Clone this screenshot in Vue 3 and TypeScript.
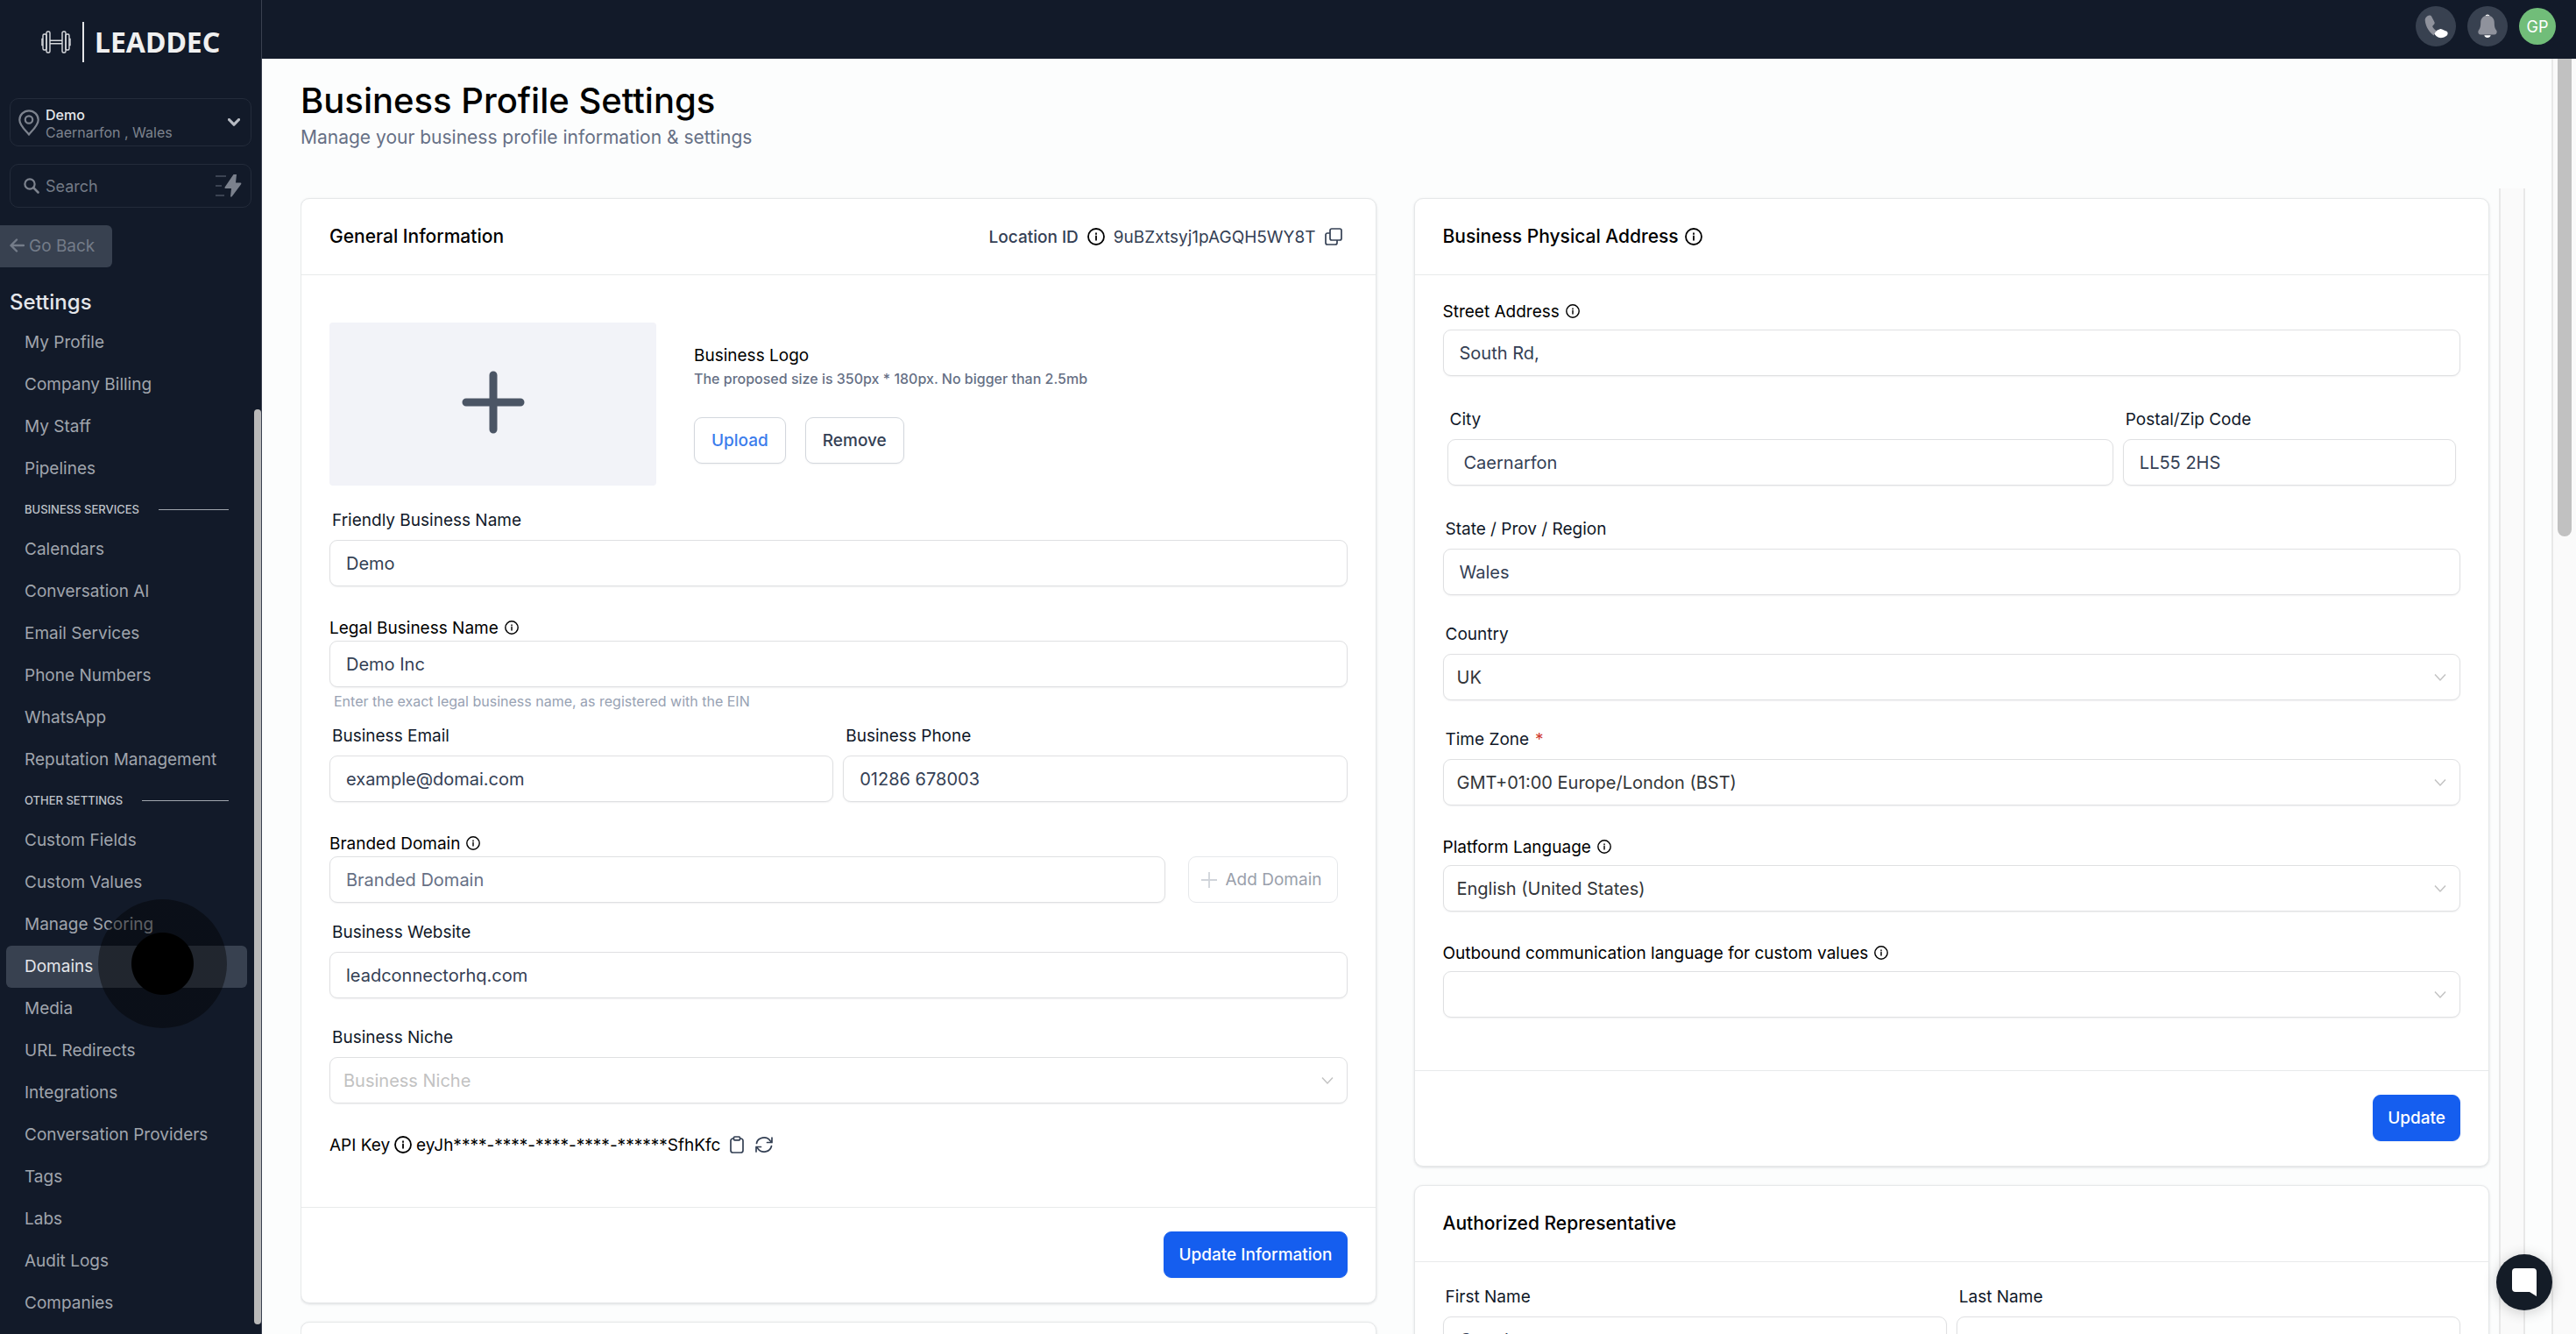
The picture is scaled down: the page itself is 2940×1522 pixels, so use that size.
<script setup lang="ts">
import { ref } from 'vue'

interface NavGroup {
  title?: string
  items: string[]
}

const navGroups: NavGroup[] = [
  { items: ['My Profile', 'Company Billing', 'My Staff', 'Pipelines'] },
  {
    title: 'BUSINESS SERVICES',
    items: ['Calendars', 'Conversation AI', 'Email Services', 'Phone Numbers', 'WhatsApp', 'Reputation Management'],
  },
  {
    title: 'OTHER SETTINGS',
    items: [
      'Custom Fields', 'Custom Values', 'Manage Scoring', 'Domains', 'Media', 'URL Redirects',
      'Integrations', 'Conversation Providers', 'Tags', 'Labs', 'Audit Logs', 'Companies',
    ],
  },
]
const activeItem = 'Domains'

const form = ref({
  friendlyName: 'Demo',
  legalName: 'Demo Inc',
  email: 'example@domai.com',
  phone: '01286 678003',
  brandedDomain: '',
  website: 'leadconnectorhq.com',
  niche: '',
  street: 'South Rd,',
  city: 'Caernarfon',
  postal: 'LL55 2HS',
  state: 'Wales',
  country: 'UK',
  timeZone: 'GMT+01:00 Europe/London (BST)',
  language: 'English (United States)',
  outbound: '',
  firstName: 'Gareth',
  lastName: '',
})
</script>

<template>
  <div class="app">
    <svg class="symbols" aria-hidden="true">
      <symbol id="i-info" viewBox="0 0 20 20">
        <circle cx="10" cy="10" r="9" fill="none" stroke="currentColor" stroke-width="1.8" />
        <path d="M10 9.4v4.4M10 6.2v.9" fill="none" stroke="currentColor" stroke-width="1.8" stroke-linecap="round" />
      </symbol>
      <symbol id="i-chev" viewBox="0 0 14 10">
        <path d="M1 1.5l6 6.500 6-6.500" fill="none" stroke="currentColor" stroke-width="1.500" />
      </symbol>
    </svg>

    <aside class="sidebar">
      <div class="brand">
        <svg class="dumbbell" viewBox="0 0 34 26" fill="none" stroke="#d8dade" stroke-width="1.400">
          <rect x="6" y="1" width="4" height="24" rx="1.500" />
          <rect x="2" y="4" width="4" height="18" rx="1.500" />
          <path d="M2 9.500H1v7h1M32 9.500h1v7h-1M10 11.200h14M10 14.800h14" />
          <rect x="24" y="1" width="4" height="24" rx="1.500" />
          <rect x="28" y="4" width="4" height="18" rx="1.500" />
        </svg>
        <span class="brand-rule"></span>
        <span class="brand-name">LEADDEC</span>
      </div>

      <button class="location" type="button">
        <svg class="pin" viewBox="0 0 24 30" fill="none" stroke="currentColor" stroke-width="2.200">
          <path d="M12 28.500C9 24.500 1.300 18.500 1.300 11.800a10.700 10.500 0 0 1 21.400 0C22.700 18.500 15 24.500 12 28.500z" stroke-linejoin="round" />
          <circle cx="12" cy="11.500" r="4.200" />
        </svg>
        <span class="location-text">
          <span class="location-name">Demo</span>
          <span class="location-place">Caernarfon , Wales</span>
        </span>
        <svg class="location-chev" viewBox="0 0 14 10" fill="none" stroke="#b6bac2" stroke-width="3.200">
          <path d="M1.500 1.500L7 7.200l5.500-5.700" stroke-linecap="round" stroke-linejoin="round" />
        </svg>
      </button>

      <div class="search">
        <svg class="search-icon" viewBox="0 0 18 18" fill="none" stroke="currentColor" stroke-width="2.200">
          <circle cx="7" cy="7" r="5.600" />
          <path d="M11.200 11.200L16.500 16.500" stroke-linecap="round" stroke-width="2.600" />
        </svg>
        <input type="search" placeholder="Search" aria-label="Search" />
        <svg class="bolt" viewBox="0 0 30 28">
          <path d="M0 3h12M0 14h7M0 25h10" stroke="#3b4352" stroke-width="2" />
          <path d="M20.500 1h3.500l-1 9.500h5.500c1 0 1 1 .6 1.700L18.500 26.500h-1.500l1-9.500h-6.500c-1 0-1.300-1-.7-1.800z" fill="#7b818d" />
        </svg>
      </div>

      <button class="go-back" type="button">
        <svg viewBox="0 0 17 16" fill="none" stroke="currentColor" stroke-width="2.400" stroke-linecap="round" stroke-linejoin="round">
          <path d="M8 1.500L1.500 8 8 14.500M2 8h14" />
        </svg>
        Go Back
      </button>

      <h2 class="side-title">Settings</h2>
      <nav class="nav">
        <template v-for="(group, gi) in navGroups" :key="gi">
          <div v-if="group.title" class="nav-section">
            <span>{{ group.title }}</span>
            <span class="nav-rule"></span>
          </div>
          <a v-for="item in group.items" :key="item" href="#" class="nav-item" :class="{ active: item === activeItem }">{{ item }}</a>
        </template>
      </nav>
      <span class="side-thumb"></span>
      <span class="pointer"></span>
    </aside>

    <div class="right">
      <header class="topbar">
        <button class="round" type="button" aria-label="Call">
          <svg viewBox="0 0 28 28">
            <path d="M6.500 1.500c-1.800.2-5 2.500-4.800 5.500.5 8 6 15 10 17.500l2.800-5.500c-2-1.300-3.500-3-4.400-5l2.300-2.800c.4-.6.4-1.300.1-1.900L9 2.400c-.5-.8-1.300-1.100-2.500-.9z" fill="#8f929c" />
            <path d="M12.500 22.500c2-4.500 4.500-4.500 7-5.500 2.500.6 4 1.800 7 2.800 1.500 1.200 1.500 3.200.2 4.700-2 2-6 3-8.700 2.500-2.500-.7-4.500-2.500-5.500-4.500z" fill="#fff" />
          </svg>
        </button>
        <button class="round" type="button" aria-label="Notifications">
          <svg viewBox="0 0 28 28">
            <path d="M11.500 2a2.600 2.200 0 0 1 5 0z" fill="#fff" />
            <path d="M14 1.800c4.700 0 7.800 3.300 7.800 8 0 5 .8 7 2.300 8.700 1.200 1.500.5 5-2.100 5H6c-2.600 0-3.300-3.500-2.100-5 1.500-1.700 2.300-3.700 2.300-8.700 0-4.700 3.100-8 7.800-8z" fill="#8f929c" />
            <path d="M10.300 24.300h7.400c-.5 1.700-1.800 2.700-3.700 2.700s-3.200-1-3.700-2.700z" fill="#fff" />
          </svg>
        </button>
        <button class="avatar" type="button">GP</button>
      </header>

      <div class="page">
        <main class="content">
          <h1>Business Profile Settings</h1>
          <p class="subtitle">Manage your business profile information &amp; settings</p>

          <div class="scroller">
            <div class="columns">
              <div class="column">
                <section class="card">
                  <div class="card-head">
                    <h3>General Information</h3>
                    <div class="location-id">
                      <span class="strong">Location ID</span>
                      <svg class="info big"><use href="#i-info" /></svg>
                      <span>9uBZxtsyj1pAGQH5WY8T</span>
                      <button class="bare" type="button" aria-label="Copy">
                        <svg viewBox="0 0 20 20" fill="none" stroke="currentColor" stroke-width="1.700">
                          <rect x="6" y="1" width="13" height="13" rx="2" />
                          <path d="M6 6H3a2 2 0 0 0-2 2v9a2 2 0 0 0 2 2h9a2 2 0 0 0 2-2v-3" />
                        </svg>
                      </button>
                    </div>
                  </div>
                  <div class="card-body general">
                    <div class="logo-row">
                      <button class="logo-drop" type="button" aria-label="Add logo">
                        <svg viewBox="0 0 72 72" stroke="#4b5565" stroke-width="9" stroke-linecap="round">
                          <path d="M36 5v62M5 36h62" />
                        </svg>
                      </button>
                      <div class="logo-info">
                        <span class="logo-title">Business Logo</span>
                        <span class="logo-hint">The proposed size is 350px * 180px. No bigger than 2.5mb</span>
                        <div class="logo-actions">
                          <button class="btn link" type="button">Upload</button>
                          <button class="btn" type="button">Remove</button>
                        </div>
                      </div>
                    </div>

                    <div class="field loose gap-m">
                      <label for="friendly">Friendly Business Name</label>
                      <input id="friendly" v-model="form.friendlyName" type="text" />
                    </div>
                    <div class="field tight gap-l">
                      <label for="legal">Legal Business Name <svg class="info"><use href="#i-info" /></svg></label>
                      <input id="legal" v-model="form.legalName" type="text" />
                      <p class="hint">Enter the exact legal business name, as registered with the EIN</p>
                    </div>
                    <div class="pair gap-s">
                      <div class="field loose">
                        <label for="email">Business Email</label>
                        <input id="email" v-model="form.email" type="email" />
                      </div>
                      <div class="field loose">
                        <label for="phone">Business Phone</label>
                        <input id="phone" v-model="form.phone" type="tel" />
                      </div>
                    </div>
                    <div class="field tight gap-l">
                      <label for="branded">Branded Domain <svg class="info"><use href="#i-info" /></svg></label>
                      <div class="domain-row">
                        <input id="branded" v-model="form.brandedDomain" type="text" placeholder="Branded Domain" />
                        <button class="btn add" type="button" disabled>
                          <svg viewBox="0 0 18 18" stroke="#d0d4da" stroke-width="1.800"><path d="M9 0v18M0 9h18" /></svg>
                          Add Domain
                        </button>
                      </div>
                    </div>
                    <div class="field loose gap-w">
                      <label for="website">Business Website</label>
                      <input id="website" v-model="form.website" type="text" />
                    </div>
                    <div class="field loose gap-x">
                      <label for="niche">Business Niche</label>
                      <div class="select">
                        <select id="niche" v-model="form.niche" class="empty"><option value="">Business Niche</option></select>
                        <svg><use href="#i-chev" /></svg>
                      </div>
                    </div>
                    <div class="api gap-l">
                      <span>API Key</span>
                      <svg class="info big"><use href="#i-info" /></svg>
                      <span class="api-key">eyJh****-****-****-****-******SfhKfc</span>
                      <button class="bare" type="button" aria-label="Copy API key">
                        <svg viewBox="0 0 20 20" fill="none" stroke="currentColor" stroke-width="1.700">
                          <path d="M6 3H4.500A2.500 2.500 0 0 0 2 5.500v11A2.500 2.500 0 0 0 4.500 19h9a2.500 2.500 0 0 0 2.500-2.500v-11A2.500 2.500 0 0 0 13.500 3H12" />
                          <rect x="5.500" y="1" width="7" height="3.800" rx="1" />
                        </svg>
                      </button>
                      <button class="bare" type="button" aria-label="Refresh API key">
                        <svg viewBox="0 0 20 20" fill="none" stroke="currentColor" stroke-width="1.700" stroke-linecap="round" stroke-linejoin="round">
                          <path d="M1.500 8.500a8.500 7.800 0 0 1 15.500-3L19 7.500M19 2v5.500h-5.500M18.500 11.500a8.500 7.800 0 0 1-15.500 3L1 12.500M1 18v-5.500h5.500" />
                        </svg>
                      </button>
                    </div>
                  </div>
                  <div class="card-foot"><button class="btn primary" type="button">Update Information</button></div>
                </section>
                <section class="card"><div class="card-head"></div></section>
              </div>

              <div class="column">
                <section class="card">
                  <div class="card-head">
                    <h3>Business Physical Address <svg class="info big"><use href="#i-info" /></svg></h3>
                  </div>
                  <div class="card-body address">
                    <div class="field mid">
                      <label for="street">Street Address <svg class="info"><use href="#i-info" /></svg></label>
                      <input id="street" v-model="form.street" type="text" />
                    </div>
                    <div class="pair city gap-xl">
                      <div class="field loose">
                        <label for="city">City</label>
                        <input id="city" v-model="form.city" type="text" />
                      </div>
                      <div class="field loose">
                        <label for="postal">Postal/Zip Code</label>
                        <input id="postal" v-model="form.postal" type="text" />
                      </div>
                    </div>
                    <div class="field loose gap-xl">
                      <label for="state">State / Prov / Region</label>
                      <input id="state" v-model="form.state" type="text" />
                    </div>
                    <div class="field loose gap-x">
                      <label for="country">Country</label>
                      <div class="select">
                        <select id="country" v-model="form.country"><option>UK</option></select>
                        <svg><use href="#i-chev" /></svg>
                      </div>
                    </div>
                    <div class="field loose gap-x">
                      <label for="tz">Time Zone <span class="req">*</span></label>
                      <div class="select">
                        <select id="tz" v-model="form.timeZone"><option>GMT+01:00 Europe/London (BST)</option></select>
                        <svg><use href="#i-chev" /></svg>
                      </div>
                    </div>
                    <div class="field mid gap-l">
                      <label for="lang">Platform Language <svg class="info"><use href="#i-info" /></svg></label>
                      <div class="select">
                        <select id="lang" v-model="form.language"><option>English (United States)</option></select>
                        <svg><use href="#i-chev" /></svg>
                      </div>
                    </div>
                    <div class="field mid gap-l">
                      <label for="outbound">Outbound communication language for custom values <svg class="info"><use href="#i-info" /></svg></label>
                      <div class="select">
                        <select id="outbound" v-model="form.outbound"><option value=""></option></select>
                        <svg><use href="#i-chev" /></svg>
                      </div>
                    </div>
                  </div>
                  <div class="card-foot"><button class="btn primary" type="button">Update</button></div>
                </section>

                <section class="card">
                  <div class="card-head"><h3>Authorized Representative</h3></div>
                  <div class="card-body rep">
                    <div class="pair">
                      <div class="field loose">
                        <label for="first">First Name</label>
                        <input id="first" v-model="form.firstName" type="text" />
                      </div>
                      <div class="field loose">
                        <label for="last">Last Name</label>
                        <input id="last" v-model="form.lastName" type="text" />
                      </div>
                    </div>
                  </div>
                </section>
              </div>
            </div>
            <div class="inner-track"></div>
          </div>
        </main>
        <div class="outer-track"><span class="outer-thumb"></span></div>
      </div>
    </div>

    <button class="chat" type="button" aria-label="Open chat">
      <svg viewBox="0 0 28 32"><path d="M4 0h20a4 4 0 0 1 4 4v28l-8-5H4a4 4 0 0 1-4-4V4a4 4 0 0 1 4-4z" fill="#fff" /></svg>
    </button>
  </div>
</template>

<style>
body {
  margin: 0;
  overflow: hidden;
}
</style>

<style scoped>
* {
  box-sizing: border-box;
}
.app {
  display: flex;
  height: 100vh;
  overflow: hidden;
  background: #fcfdfd;
  font-family: Inter, "Liberation Sans", sans-serif;
  font-size: 19px;
  color: #000;
}
button,
input,
select {
  font-family: inherit;
  margin: 0;
}
.symbols {
  position: absolute;
  width: 0;
  height: 0;
}
h1,
h2,
h3,
p {
  margin: 0;
  font-weight: 500;
}

/* Sidebar */
.sidebar {
  position: relative;
  flex: none;
  width: 299px;
  background: #121a29;
  border-right: 1px solid #3a4150;
}
.brand {
  display: flex;
  align-items: center;
  height: 46px;
  margin: 25px 0 41px 47px;
}
.dumbbell {
  width: 34px;
  height: 28px;
}
.brand-rule {
  width: 2px;
  height: 46px;
  margin: 0 12px 0 13px;
  background: #e4e5e7;
}
.brand-name {
  font-family: "Noto Sans", "Open Sans", sans-serif;
  font-weight: 700;
  font-size: 32px;
  line-height: 46px;
  color: #f0f0f0;
}
.location,
.search {
  display: flex;
  align-items: center;
  width: 276px;
  margin: 0 0 20px 11px;
  border: 1px solid #232b3a;
  border-radius: 10px;
  background: transparent;
}
.location {
  height: 55px;
  padding: 0 12px 0 9px;
  text-align: left;
  color: #7d838e;
}
.pin {
  width: 24px;
  height: 30px;
}
.location-text {
  flex: 1;
  display: flex;
  flex-direction: column;
  margin-left: 7px;
  padding-top: 3px;
  font-size: 16px;
  line-height: 20px;
}
.location-name {
  font-weight: 500;
  color: #e6e8eb;
}
.location-chev {
  width: 14px;
  height: 10px;
}
.search {
  height: 50px;
  padding: 0 10px 0 15px;
  color: #7d838e;
}
.search-icon {
  flex: none;
  width: 18px;
  height: 18px;
}
.search input {
  flex: 1;
  min-width: 0;
  margin-left: 7px;
  padding: 0;
  border: 0;
  outline: 0;
  background: transparent;
  font-size: 18px;
  color: #7d838e;
}
.search input::placeholder {
  color: #747a86;
}
.bolt {
  flex: none;
  width: 30px;
  height: 28px;
}
.go-back {
  display: flex;
  align-items: center;
  gap: 5px;
  width: 128px;
  height: 48px;
  margin: 0 0 24px;
  padding: 0 0 2px 11px;
  border: 0;
  border-radius: 0 6px 6px 0;
  background: #384150;
  font-size: 19px;
  color: #747c89;
}
.go-back svg {
  width: 17px;
  height: 16px;
}
.side-title {
  margin: 0 0 6px 11px;
  font-size: 24px;
  line-height: 32px;
  color: #e4e6ea;
}
.nav {
  display: flex;
  flex-direction: column;
}
.nav-item {
  margin: 0 16px 0 7px;
  padding-left: 21px;
  border-radius: 6px;
  font-size: 19px;
  line-height: 48px;
  color: #a0a5ad;
  text-decoration: none;
}
.nav-item.active {
  background: #384150;
  color: #e4e6ea;
}
.nav-section {
  display: flex;
  align-items: center;
  gap: 22px;
  height: 44px;
  padding: 0 37px 0 28px;
  font-size: 13px;
  font-weight: 500;
  color: #bfc3ca;
}
.nav-rule {
  flex: 1;
  height: 1px;
  background: #a0a5ad;
}
.side-thumb {
  position: absolute;
  right: 0;
  top: 467px;
  bottom: 11px;
  width: 8px;
  border-radius: 4px;
  background: #b9b9b9;
}
.pointer {
  position: absolute;
  left: 112px;
  top: 1026px;
  width: 147px;
  height: 147px;
  border-radius: 50%;
  background: radial-gradient(circle, #000 0 35px, rgba(0, 0, 0, 0.42) 36px);
}

/* Top bar */
.right {
  flex: 1;
  min-width: 0;
  display: flex;
  flex-direction: column;
}
.topbar {
  flex: none;
  display: flex;
  justify-content: flex-end;
  gap: 13px;
  height: 67px;
  padding: 7px 23px 0 0;
  background: #121a29;
}
.round,
.avatar {
  display: flex;
  align-items: center;
  justify-content: center;
  padding: 0;
  border: 0;
  border-radius: 50%;
}
.round {
  width: 46px;
  height: 46px;
  background: #384150;
}
.round svg {
  width: 28px;
  height: 28px;
}
.avatar {
  width: 42px;
  height: 42px;
  margin-top: 2px;
  background: #71bd79;
  font-size: 18px;
  color: #fff;
}

/* Page */
.page {
  flex: 1;
  min-height: 0;
  display: flex;
}
.content {
  flex: 1;
  min-width: 0;
  display: flex;
  flex-direction: column;
  padding: 24px 30px 0 44px;
}
h1 {
  font-size: 40px;
  line-height: 48px;
}
.subtitle {
  margin: 4px 0 44px;
  font-size: 21px;
  line-height: 28px;
  font-weight: 400;
  color: #667085;
}
.scroller {
  flex: 1;
  min-height: 0;
  display: flex;
  overflow: hidden;
}
.columns {
  flex: 1;
  display: grid;
  grid-template-columns: 1fr 1fr;
  gap: 43px;
  padding: 11px 11px 0 0;
}
.column {
  min-width: 0;
}
.inner-track {
  width: 30px;
  background: #fafafa;
  border: solid #e8e8e8;
  border-width: 0 2px;
}
.outer-track {
  width: 28px;
  background: #fafafa;
  border-left: 2px solid #e8e8e8;
}
.outer-thumb {
  display: block;
  width: 16px;
  height: 545px;
  margin-left: 5px;
  border-radius: 0 0 8px 8px;
  background: #c1c1c1;
}

/* Cards */
.card {
  margin-bottom: 21px;
  background: #fff;
  border: 1px solid #e6e8e9;
  border-radius: 10px;
  box-shadow: 0 1px 3px rgba(16, 24, 40, 0.14);
}
.card-head {
  display: flex;
  align-items: center;
  justify-content: space-between;
  height: 87px;
  padding: 0 38px 0 32px;
  border-bottom: 1px solid #e8eaeb;
}
h3 {
  display: flex;
  align-items: center;
  gap: 7px;
  font-size: 21px;
  line-height: 28px;
}
.location-id {
  display: flex;
  align-items: center;
  gap: 10px;
  color: #344054;
}
.strong {
  font-weight: 500;
}
.info {
  width: 16px;
  height: 16px;
  color: #000;
}
.info.big {
  width: 20px;
  height: 20px;
}
.bare {
  display: flex;
  padding: 0;
  border: 0;
  background: transparent;
  color: #344054;
}
.bare svg {
  width: 20px;
  height: 20px;
}
.card-body {
  padding: 0 32px;
}
.general {
  padding-top: 54px;
  padding-bottom: 59px;
}
.address {
  padding-top: 29px;
  padding-bottom: 60px;
}
.rep {
  padding-top: 27px;
  padding-bottom: 59px;
}
.card-foot {
  display: flex;
  justify-content: flex-end;
  padding: 27px 32px 28px;
  border-top: 1px solid #e8eaeb;
}
.logo-row {
  display: flex;
  gap: 43px;
}
.logo-drop {
  display: flex;
  align-items: center;
  justify-content: center;
  width: 373px;
  height: 186px;
  padding: 0 0 5px;
  border: 0;
  border-radius: 4px;
  background: #f2f3f8;
}
.logo-drop svg {
  width: 72px;
  height: 72px;
}
.logo-info {
  display: flex;
  flex-direction: column;
  padding-top: 24px;
}
.logo-title {
  font-size: 19px;
  line-height: 28px;
}
.logo-hint {
  font-size: 16px;
  line-height: 24px;
  font-weight: 500;
  color: #667085;
}
.logo-actions {
  display: flex;
  gap: 22px;
  margin-top: 32px;
}
.btn {
  height: 53px;
  padding: 0 19px;
  border: 1px solid #d3d7dd;
  border-radius: 9px;
  background: #fff;
  box-shadow: 0 1px 2px rgba(16, 24, 40, 0.05);
  font-size: 19px;
  font-weight: 500;
  color: #344054;
}
.btn.link {
  color: #3b7cec;
}
.btn.primary {
  padding: 0 16px;
  border-color: #155eef;
  background: #155eef;
  color: #fff;
}
.btn.add {
  display: flex;
  align-items: center;
  gap: 10px;
  width: 171px;
  margin-right: 11px;
  padding: 0 14px;
  border-color: #e6e8eb;
  box-shadow: none;
  font-weight: 400;
  white-space: nowrap;
  color: #9aa0ab;
}
.btn.add svg {
  flex: none;
  width: 18px;
  height: 18px;
}

/* Fields */
.field {
  display: flex;
  flex-direction: column;
}
.field label {
  display: flex;
  align-items: center;
  gap: 7px;
  height: 24px;
  font-size: 19px;
  white-space: nowrap;
}
.field.loose label {
  margin-bottom: 11px;
  padding-left: 3px;
  color: #101828;
}
.field.mid label {
  margin-bottom: 9px;
}
.field.tight label {
  margin-bottom: 3px;
}
.gap-s {
  margin-top: 15px;
}
.gap-w {
  margin-top: 21px;
}
.gap-m {
  margin-top: 27px;
}
.gap-x {
  margin-top: 32px;
}
.gap-l {
  margin-top: 35px;
}
.gap-xl {
  margin-top: 37px;
}
.field input,
.field select {
  width: 100%;
  height: 53px;
  padding: 0 18px;
  border: 1px solid #dfe0e2;
  border-radius: 9px;
  outline: 0;
  background: #fff;
  box-shadow: 0 1px 2px rgba(16, 24, 40, 0.06);
  font-size: 20px;
  color: #344054;
}
.field input::placeholder {
  color: #667085;
}
.field select {
  appearance: none;
  padding: 0 44px 0 15px;
  color: #333639;
}
.field select.empty {
  color: #c2c2c2;
}
.select {
  position: relative;
}
.select svg {
  position: absolute;
  right: 16px;
  top: 22px;
  width: 14px;
  height: 10px;
  color: #c2c2c2;
}
.hint {
  margin-top: 4px;
  padding-left: 5px;
  font-size: 16px;
  line-height: 24px;
  font-weight: 400;
  color: #98a2b3;
}
.pair {
  display: grid;
  grid-template-columns: 1fr 1fr;
  gap: 11px;
}
.pair.city {
  grid-template-columns: 2fr 1fr;
  padding: 0 5px;
}
.domain-row {
  display: flex;
  gap: 26px;
}
.domain-row input {
  flex: 1;
}
.req {
  color: #d03a2f;
}
.api {
  display: flex;
  align-items: center;
  gap: 5px;
  height: 24px;
}
.api .bare {
  margin-left: 5px;
}

.chat {
  position: absolute;
  right: 27px;
  bottom: 27px;
  display: flex;
  align-items: center;
  justify-content: center;
  width: 64px;
  height: 64px;
  padding: 0;
  border: 0;
  border-radius: 50%;
  background: #141c27;
  box-shadow: 0 2px 16px rgba(0, 0, 0, 0.2);
}
.chat svg {
  width: 28px;
  height: 32px;
}
</style>
